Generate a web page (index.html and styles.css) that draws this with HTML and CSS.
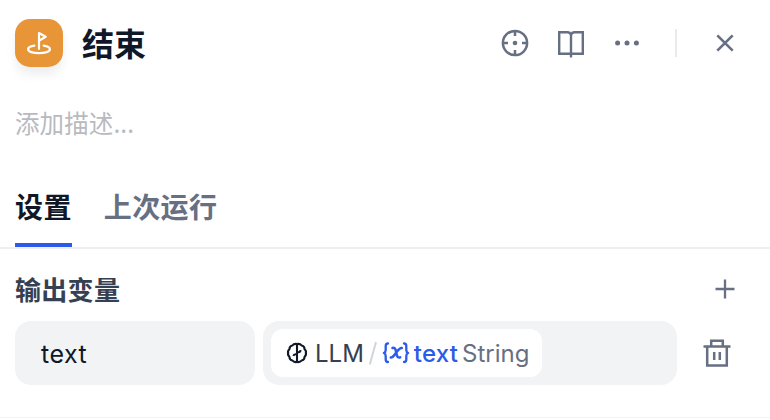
FILE: index.html
```
<!DOCTYPE html>
<html lang="zh-CN">
<head>
<meta charset="utf-8">
<title>结束</title>
<link rel="stylesheet" href="styles.css">
</head>
<body>
<main class="panel">
  <header class="header">
    <span class="node-icon">
      <svg width="28" height="28" viewBox="0 0 28 28" fill="none" stroke="#fff" stroke-width="2.2" stroke-linecap="round" stroke-linejoin="round"><path d="M14 20V4L20.7 7.8L14 11.7"/><path d="M9.3 16.7C5.4 17.3 3.1 18.9 3.1 20.2C3.1 22.6 8 24.2 14 24.2S24.9 22.6 24.9 20.2C24.9 18.9 22.6 17.3 18.7 16.7"/></svg>
    </span>
    <h1 class="title">结束</h1>
    <nav class="actions">
      <svg width="28" height="28" viewBox="0 0 28 28" fill="none" stroke="currentColor" stroke-width="2.5"><circle cx="14" cy="14" r="12.1"/><path d="M14 2V7M14 21V26M2 14H7M21 14H26"/><circle cx="14" cy="14" r="2.3" fill="currentColor" stroke="none"/></svg>
      <svg width="28" height="28" viewBox="0 0 28 28" fill="none" stroke="currentColor" stroke-width="2.4"><path d="M14 28.5V5.8M2.2 3.2H10.6C12.4 3.2 13.4 4.2 14 5.8C14.6 4.2 15.6 3.2 17.4 3.2H25.8V24.8H2.2Z"/></svg>
      <svg width="28" height="28" viewBox="0 0 28 28" fill="currentColor"><circle cx="4.6" cy="14" r="2.5"/><circle cx="14" cy="14" r="2.5"/><circle cx="23.4" cy="14" r="2.5"/></svg>
      <span class="divider"></span>
      <svg width="28" height="28" viewBox="0 0 28 28" fill="none" stroke="currentColor" stroke-width="2.6"><path d="M6.3 6.3L21.7 21.7M21.7 6.3L6.3 21.7"/></svg>
    </nav>
  </header>
  <p class="description">添加描述...</p>
  <div class="tabs">
    <span class="tab tab-active">设置</span>
    <span class="tab">上次运行</span>
  </div>
  <section class="outputs">
    <div class="section-head">
      <h2 class="section-title">输出变量</h2>
      <svg width="28" height="28" viewBox="0 0 28 28" fill="none" stroke="currentColor" stroke-width="2.3"><path d="M14 4.5V23.5M4.5 14H23.5"/></svg>
    </div>
    <div class="row">
      <div class="field name-field">text</div>
      <div class="field value-field">
        <div class="chip">
          <svg class="brain" width="22" height="22" viewBox="0 0 22 22" fill="none" stroke="currentColor" stroke-width="2.1" stroke-linejoin="round"><path d="M11 1.8V20.2"/><path d="M11 2C9 1.7 7.3 2.2 6.4 3.5C4.5 3.7 3.5 5.2 3.4 7.3C2 8.7 1.7 10 2.2 11C1.7 12 2 13.3 3.4 14.7C3.5 16.8 4.5 18.2 6.4 18.5C7.3 19.8 9 20.3 11 20"/><path d="M11 2C13 1.7 14.7 2.2 15.6 3.5C17.5 3.7 18.5 5.2 18.6 7.3C20 8.7 20.3 10 19.8 11C20.3 12 20 13.3 18.6 14.7C18.5 16.8 17.5 18.2 15.6 18.5C14.7 19.8 13 20.3 11 20"/><path d="M11 12.3H9.6C8.3 12.3 7.6 12.9 7.4 14M11 10.2H12.4C13.8 10.2 14.5 9.4 14.6 8.2" stroke-width="2"/></svg>
          <span class="node-name">LLM</span>
          <svg class="slash" width="12" height="28" viewBox="0 0 12 28" fill="none" stroke="#d0d5dc" stroke-width="2"><path d="M1.8 25.5L8 3"/></svg>
          <svg class="variable" width="28" height="28" viewBox="0 0 28 28" fill="none" stroke="currentColor" stroke-width="2.3" stroke-linecap="round" stroke-linejoin="round"><path d="M6 4.5C4.4 4.5 3.7 5.4 3.7 7V11C3.7 12.6 3.1 13.5 1.9 14C3.1 14.5 3.7 15.4 3.7 17V20.5C3.7 22.1 4.4 23 6 23M22 4.5C23.6 4.5 24.3 5.4 24.3 7V11C24.3 12.6 24.9 13.5 26.1 14C24.9 14.5 24.3 15.4 24.3 17V20.5C24.3 22.1 23.6 23 22 23"/><path d="M10.5 9C12.3 8.4 13.2 9.3 13.7 11.2L14.9 16.3C15.4 18.3 16.4 19 18.2 18.4M19.8 9C17.8 8.6 16.7 10.2 14.4 13.3C11.9 16.8 10.8 18.8 8.8 18.5" stroke-width="2.5"/></svg>
          <span class="variable-name">text</span>
          <span class="variable-type">String</span>
        </div>
      </div>
      <svg class="trash" width="32" height="32" viewBox="0 0 32 32" fill="none" stroke="currentColor" stroke-width="2.5"><path d="M2.5 9.4H29.5M6.2 9.4V28.4H25.8V9.4M10.2 9.4V3.7H21.8V9.4M13.2 15V23M18.8 15V23"/></svg>
    </div>
  </section>
</main>
</body>
</html>
```
FILE: styles.css
```
* {
  box-sizing: border-box;
}

body {
  margin: 0;
  background: #fff;
  color: #101828;
  font-family: Inter, "Noto Sans CJK SC", sans-serif;
}

svg {
  display: block;
  flex: none;
  overflow: visible;
}

.panel {
  width: 770px;
  height: 418px;
  border-bottom: 1px solid #f2f3f5;
}

.header {
  display: flex;
  align-items: center;
  height: 86px;
  padding: 0 31px 0 15px;
}

.node-icon {
  display: grid;
  place-items: center;
  width: 48px;
  height: 48px;
  border-radius: 15px;
  background: #e79537;
  box-shadow: 0 8px 12px -2px rgba(16, 24, 40, 0.09);
}

.title {
  margin: 0 0 2px 19px;
  font: 700 32px/48px "Noto Sans CJK SC", sans-serif;
}

.actions {
  display: flex;
  align-items: center;
  gap: 28px;
  margin-left: auto;
  color: #676f83;
}

.divider {
  width: 2px;
  height: 28px;
  margin: 0 6px;
  background: #e9eaec;
}

.description {
  height: 76px;
  margin: 0;
  padding: 19px 15px 0;
  color: #b8babf;
  font: 400 24.5px/36px "Noto Sans CJK SC", sans-serif;
  letter-spacing: 0.1px;
}

.tabs {
  display: flex;
  gap: 32px;
  height: 87px;
  padding: 0 15px;
  border-bottom: 2px solid #eeeff1;
}

.tab {
  height: 85px;
  padding-top: 24px;
  color: #676f83;
  font: 700 28px/40px "Noto Sans CJK SC", sans-serif;
  letter-spacing: 0.4px;
}

.tab-active {
  border-bottom: 4px solid #2b5be8;
  color: #101828;
}

.section-head {
  display: flex;
  align-items: center;
  justify-content: space-between;
  height: 72px;
  padding: 8px 31px 0 15px;
  color: #676f83;
}

.section-title {
  margin: 0;
  color: #354052;
  font: 700 26px/40px "Noto Sans CJK SC", sans-serif;
  letter-spacing: 0.3px;
}

.row {
  display: flex;
  align-items: center;
  gap: 8px;
  padding: 0 15px;
}

.field {
  display: flex;
  align-items: center;
  height: 64px;
  border-radius: 16px;
  background: #f1f3f5;
}

.name-field {
  width: 240px;
  padding: 2px 0 0 26px;
  font-size: 25px;
  letter-spacing: 0.5px;
}

.value-field {
  width: 414px;
  padding: 8px;
}

.chip {
  display: flex;
  align-items: center;
  width: 271px;
  height: 48px;
  padding-left: 15px;
  border-radius: 12px;
  background: #fff;
  font-size: 24px;
  white-space: nowrap;
}

.node-name {
  margin-left: 7px;
  color: #354052;
}

.slash {
  margin-left: 4px;
}

.variable {
  margin-left: 2px;
  color: #2b5be8;
}

.variable-name {
  margin-left: 4px;
  color: #2b5be8;
  font-weight: 500;
  letter-spacing: 0.2px;
}

.variable-type {
  margin-left: 4px;
  color: #676f83;
}

.trash {
  margin-left: 16px;
  color: #676f83;
}
```
